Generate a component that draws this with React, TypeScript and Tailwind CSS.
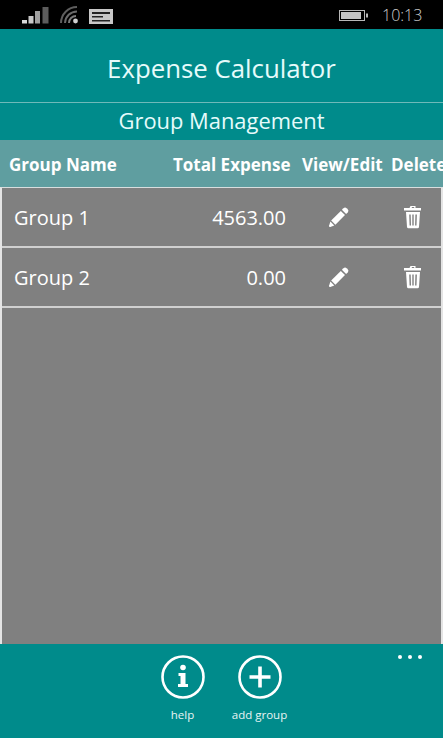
import { ReactNode } from "react"

const groups = [
  { name: "Group 1", total: "4563.00" },
  { name: "Group 2", total: "0.00" },
]

function StatusBar() {
  return (
    <div className="h-[29px] bg-black flex items-center relative text-[#cfcfcf]">
      <svg width="130" height="29" viewBox="0 0 130 29" className="shrink-0">
        <rect x="22" y="20" width="5" height="3.5" fill="#d8d8d8" />
        <rect x="28.5" y="16" width="5" height="7.5" fill="#c8c8c8" />
        <rect x="35" y="11" width="5" height="12.5" fill="#a0a0a0" />
        <rect x="42.5" y="7" width="6" height="16.5" fill="#5c5c5c" />
        <path d="M61 23 A16 16 0 0 1 77 7" fill="none" stroke="#5e5e5e" strokeWidth="2" />
        <path d="M65 23 A12 12 0 0 1 77 11.5" fill="none" stroke="#6a6a6a" strokeWidth="2" />
        <path d="M69 23 A7 7 0 0 1 76 16" fill="none" stroke="#7a7a7a" strokeWidth="2" />
        <circle cx="75.5" cy="21" r="2.4" fill="#d0d0d0" />
        <rect x="89" y="9" width="24" height="15" fill="#c8c8c8" />
        <rect x="92" y="12" width="18" height="2" fill="#222" />
        <rect x="92" y="16" width="11" height="1.5" fill="#222" />
        <rect x="92" y="20" width="18" height="1.5" fill="#222" />
      </svg>
      <svg width="32" height="12" viewBox="0 0 32 12" className="absolute left-[339px] top-[10px]">
        <rect x="0.5" y="0.5" width="25" height="10" fill="none" stroke="#b8b8b8" />
        <rect x="2" y="2" width="20" height="7" fill="#c4c4c4" />
        <rect x="27" y="3.5" width="2" height="4" fill="#b8b8b8" />
      </svg>
      <span className="absolute left-[382px] top-[3px] text-[16px] leading-6 font-light">10:13</span>
    </div>
  )
}

function ActionButton({ label, children }: { label: string; children: ReactNode }) {
  return (
    <div className="w-[77px] flex flex-col items-center">
      <svg width="46" height="46" viewBox="0 0 46 46" className="mt-[10px]">
        <circle cx="23" cy="23" r="20.5" fill="none" stroke="white" strokeWidth="2.6" />
        {children}
      </svg>
      <span className="mt-2 text-[11.5px] leading-[14px] text-[#e8f4f4] whitespace-nowrap">{label}</span>
    </div>
  )
}

export default function App() {
  return (
    <div
      className="w-[443px] h-[738px] flex flex-col overflow-hidden bg-[#008b8b] text-white"
      style={{ fontFamily: '"Open Sans", "Noto Sans", sans-serif' }}
    >
      <StatusBar />
      <div className="h-[73px] flex items-center justify-center text-[25.8px] text-[#e6fbfb] pt-[6px]">
        Expense Calculator
      </div>
      <div className="h-px bg-[#6fb9b9]" />
      <div className="h-[37px] flex items-center justify-center text-[21.9px] text-[#e6fbfb]">
        Group Management
      </div>
      <div className="h-[47px] bg-[#5f9ea0] flex items-center text-[17px] font-bold whitespace-nowrap overflow-hidden pt-[2px]">
        <span className="w-[173px] pl-[9px] shrink-0">Group Name</span>
        <span className="w-[129px] shrink-0">Total Expense</span>
        <span className="w-[89px] shrink-0">View/Edit</span>
        <span>Delete</span>
      </div>
      <div className="flex-1 bg-[#808080] border-x-2 border-[#e4e4e4] border-t border-t-[#d8dede]">
        {groups.map((g) => (
          <div key={g.name} className="h-[60px] flex items-center border-b-2 border-[#d0d0d0] text-[20px] pt-[2px]">
            <span className="w-[130px] pl-3">{g.name}</span>
            <span className="w-[154px] text-right">{g.total}</span>
            <div className="w-[110px] flex justify-center pr-1 -mt-[2px]">
              <svg width="22" height="22" viewBox="0 0 22 22" fill="white">
                <path d="M15.5 2.2 a2.2 2.2 0 0 1 3.1 0 l1.1 1.1 a2.2 2.2 0 0 1 0 3.1 l-1.6 1.6 -4.2 -4.2z" />
                <path d="M12.8 4.9 l4.2 4.2 -9.6 9.6 -4.2 -4.2z" />
                <path d="M2.4 15.6 l3.9 3.9 -3.4 1.2 a1 1 0 0 1 -1.6 -1.6z" />
              </svg>
            </div>
            <div className="flex-1 flex justify-center pr-[11px] -mt-[2px]">
              <svg width="18" height="24" viewBox="0 0 18 24" fill="white">
                <path d="M6.5 1 h5 v2 h5.5 v2.5 h-17 v-2.5 h5.5z M7.8 2 v1 h2.4 v-1z" fillRule="evenodd" />
                <path d="M2 7 h14 l-1 15 a1.5 1.5 0 0 1 -1.5 1.2 h-9 a1.5 1.5 0 0 1 -1.5 -1.2z M5.2 9.5 l.4 11 h1.4 l-.3 -11z M8.3 9.5 v11 h1.4 v-11z M11.4 9.5 l-.3 11 h1.4 l.4 -11z" fillRule="evenodd" />
              </svg>
            </div>
          </div>
        ))}
      </div>
      <div className="h-[94px] relative flex justify-center pr-[1px]">
        <ActionButton label="help">
          <circle cx="23" cy="13.5" r="2.8" fill="white" />
          <path d="M18.5 19 h7 v11 h2.5 v3 h-10 v-3 h2.5 v-8 h-2z" fill="white" />
        </ActionButton>
        <ActionButton label="add group">
          <path d="M21.2 12.5 h3.6 v8.7 h8.7 v3.6 h-8.7 v8.7 h-3.6 v-8.7 h-8.7 v-3.6 h8.7z" fill="white" />
        </ActionButton>
        <div className="absolute left-[398px] top-[11px] flex gap-[6px]">
          <span className="w-1 h-1 rounded-full bg-white" />
          <span className="w-1 h-1 rounded-full bg-white" />
          <span className="w-1 h-1 rounded-full bg-white" />
        </div>
      </div>
    </div>
  )
}
